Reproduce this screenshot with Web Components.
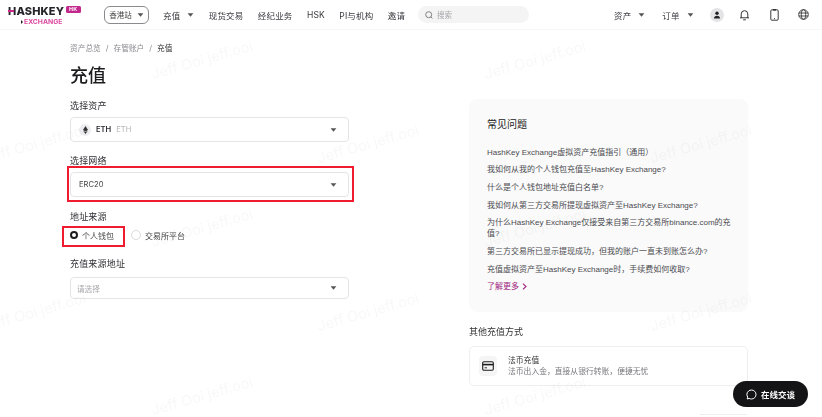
<!DOCTYPE html>
<html lang="zh"><head><meta charset="utf-8"><title>充值</title>
<style>
html,body{margin:0;padding:0;background:#fff}
body{width:822px;height:417px;overflow:hidden;font-family:Inter,"Noto Sans CJK SC",sans-serif;color:#1c1c1e}
</style></head>
<body>
<hk-app>
  <hk-header></hk-header>
  <hk-main></hk-main>
  <hk-watermark></hk-watermark>
  <hk-chat></hk-chat>
  <hk-peek></hk-peek>
</hk-app>
<script>
function def(name,css,html){
  customElements.define(name,class extends HTMLElement{
    constructor(){super();const s=this.attachShadow({mode:'open'});
      const get=(a,d='')=>this.getAttribute(a)??d;
      s.innerHTML='<style>'+css+'</style>'+(typeof html==='function'?html(get):html);}
  });
}
const caret=(c='#555')=>`<svg width="7" height="4" viewBox="0 0 7 4"><path d="M.6.3h5.8L3.5 3.7z" fill="${c}"/></svg>`;

def('hk-app',`:host{display:block;position:relative;width:822px;height:417px;overflow:hidden;filter:blur(.3px)}`,`<slot></slot>`);

def('hk-logo',`:host{display:flex;flex-direction:column;width:82px;align-items:flex-start;font-family:Inter,sans-serif;margin-top:1px}
.top{display:flex;align-items:center;gap:1.5px;height:11px}
.name{font-size:11px;font-weight:800;letter-spacing:.15px;line-height:11px;color:#24242a}
.name b{position:relative;font-weight:800;display:inline-block}
.name b::after{content:"";position:absolute;left:0;top:4.4px;width:5.5px;height:2.4px;background:#d0268c}
.hk{background:#c2288c;color:#fbe3f2;font-size:5.4px;font-weight:800;border-radius:1.5px;height:7px;line-height:7px;box-sizing:border-box;width:15px;text-align:center;margin-top:-4px}
.ex{display:flex;align-items:center;gap:1px;margin:2px 0 0 13px;font-size:6.8px;line-height:6px;font-weight:700;color:#dc4aa2}
.ex i{width:0;height:0;border-left:2.5px solid #222;border-top:2px solid transparent;border-bottom:2px solid transparent}`,
`<div class="top"><span class="name"><b>H</b>ASHKEY</span><span class="hk">HK</span></div><div class="ex"><i></i><span>EXCHANGE</span></div>`);

def('hk-nav-item',`:host{display:inline-flex;align-items:center;gap:7px;font-size:8.5px;color:#3a3a40;white-space:nowrap;letter-spacing:.02em}`,
 g=>`<span>${g('label')}</span>${g('caret')!==''?caret():''}`);

def('hk-header',`:host{display:flex;align-items:center;height:30px;box-sizing:border-box;border-bottom:1px solid #f6f6f6;padding:0 0 0 8px}
hk-logo{margin-right:14px}
.site{display:flex;align-items:center;justify-content:center;gap:5px;width:45px;height:18px;box-sizing:border-box;border:1px solid #8a8a8e;border-radius:6px;font-size:7.5px;color:#444;margin-right:14px}
nav{display:flex;gap:14.4px;align-items:center;width:255px}
.search{display:flex;align-items:center;gap:4px;width:111px;height:17px;background:#f4f4f5;border-radius:9px;box-sizing:border-box;padding-left:7px;font-size:7.5px;color:#a5a5aa;margin-right:85px}
.right{display:flex;align-items:center}
.right hk-nav-item+hk-nav-item{margin-left:17px}
.av{width:14px;height:14px;border-radius:50%;background:#e4e4e6;display:flex;align-items:center;justify-content:center;margin-left:16px}
svg.i{display:block}
.bell{margin-left:15.5px}.ph{margin-left:19.5px}.gl{margin-left:19px}`,
`<hk-logo></hk-logo>
<div class="site"><span>香港站</span>${caret()}</div>
<nav><hk-nav-item label="充值" caret="1"></hk-nav-item><hk-nav-item label="现货交易"></hk-nav-item><hk-nav-item label="经纪业务"></hk-nav-item><hk-nav-item label="HSK"></hk-nav-item><hk-nav-item label="PI与机构"></hk-nav-item><hk-nav-item label="邀请"></hk-nav-item></nav>
<div class="search"><svg class="i" width="8" height="8" viewBox="0 0 8 8" fill="none" stroke="#666" stroke-width=".8"><circle cx="3.7" cy="3.7" r="3"/><path d="M5.9 5.9 7.4 7.4"/></svg><span>搜索</span></div>
<div class="right"><hk-nav-item label="资产" caret="1"></hk-nav-item><hk-nav-item label="订单" caret="1"></hk-nav-item>
<div class="av"><svg class="i" width="8" height="8" viewBox="0 0 8 8" fill="#222"><circle cx="4" cy="2.2" r="1.7"/><path d="M1 7.4c0-1.8 1.3-2.6 3-2.6s3 .8 3 2.6z"/></svg></div>
<svg class="i bell" width="11" height="12" viewBox="0 0 11 12" fill="none" stroke="#222" stroke-width=".9"><path d="M2.2 8.8V5a3.3 3.3 0 0 1 6.6 0v3.8M1 8.8h9M4.2 10.8h2.6"/></svg>
<svg class="i ph" width="9" height="12" viewBox="0 0 9 12" fill="none" stroke="#222" stroke-width=".9"><rect x=".8" y=".8" width="7.4" height="10.4" rx="1"/><path d="M3 .9h3" stroke-width="1.3"/><path d="M4 9.6h1"/></svg>
<svg class="i gl" width="11" height="11" viewBox="0 0 11 11" fill="none" stroke="#222" stroke-width=".8"><circle cx="5.5" cy="5.5" r="4.8"/><ellipse cx="5.5" cy="5.5" rx="2.2" ry="4.8"/><path d="M.8 4h9.4M.8 7h9.4"/></svg></div>`);

def('hk-select',`:host{display:flex;align-items:center;box-sizing:border-box;width:279px;height:25px;border:1px solid #e4e4e7;border-radius:4px;padding:0 11px 0 8px;justify-content:space-between;background:#fff;font-size:7.6px;color:#444}
:host(.low){height:22px;padding-left:6px}
.l{display:flex;align-items:center;gap:5px}.ph{color:#a8a8ad}.sub{color:#b5b5ba}.m{font-weight:600;color:#2b2b30}
.coin{width:12px;height:12px;border-radius:50%;background:#eeeef2;display:flex;align-items:center;justify-content:center}`,
 g=>`<div class="l">${g('coin')?`<span class="coin"><svg width="5" height="8" viewBox="0 0 5 8" fill="#333"><path d="M2.5 0 5 4 2.5 5.4 0 4z"/><path d="M2.5 8 .2 4.8 2.5 6 4.8 4.8z"/></svg></span><span class="m">${g('coin')}</span><span class="sub">${g('coin')}</span>`:`<span class="${g('ph')?'ph':''}">${g('ph')||g('value')}</span>`}</div>${caret('#555')}`);

def('hk-label',`:host{display:block;font-size:9px;line-height:12px;color:#2e2e33;letter-spacing:.02em}`,`<slot></slot>`);

def('hk-radio',`:host{display:inline-flex;align-items:center;gap:4px;font-size:8px;color:#444}
i{width:8px;height:8px;border-radius:50%;border:1px solid #dcdce0;background:#fff;display:block}
:host([checked]) i{width:4px;height:4px;border:2.5px solid #1c1c1e}`,g=>`<i></i><span>${g('label')}</span>`);

def('hk-mark',`:host{position:absolute;display:block;border:2px solid #ee1c2e;box-sizing:border-box;pointer-events:none}`,``);

def('hk-form',`:host{display:flex;flex-direction:column;width:279px;position:relative}
.crumb{font-size:7.7px;line-height:12px;color:#8a8a90;display:flex;gap:5px;margin-top:13px}
.crumb b{font-weight:400;color:#333}
h1{margin:8px 0 0;font-size:18px;line-height:26px;font-weight:500;color:#1c1c1e}
hk-label{margin-top:13px;margin-bottom:5px}
.first{margin-top:11px}
.radios{display:flex;gap:17px;margin-top:1px;height:12px;align-items:center}
hk-label.src{margin-top:14px}
hk-label.addr{margin-top:17px;margin-bottom:7px}
.m1{left:-3px;top:136px;width:287px;height:36px}.m2{left:-8px;top:196px;width:63px;height:21px}`,
`<div class="crumb"><span>资产总览</span><span>/</span><span>存管账户</span><span>/</span><b>充值</b></div>
<h1>充值</h1>
<hk-label class="first">选择资产</hk-label><hk-select coin="ETH"></hk-select>
<hk-label>选择网络</hk-label><hk-select value="ERC20"></hk-select>
<hk-label class="src">地址来源</hk-label>
<div class="radios"><hk-radio checked label="个人钱包"></hk-radio><hk-radio label="交易所平台"></hk-radio></div>
<hk-label class="addr">充值来源地址</hk-label><hk-select class="low" ph="请选择"></hk-select>
<hk-mark class="m1"></hk-mark><hk-mark class="m2"></hk-mark>`);

def('hk-faq',`:host{display:block;box-sizing:border-box;width:279px;height:213px;background:#fafafa;border-radius:8px;padding:18px 15px 0 18px;font-family:"Liberation Sans","Noto Sans CJK SC",sans-serif;font-size:8px;color:#4a4a50}
h2{margin:0 0 13.5px;font-size:10px;line-height:16px;font-weight:400;color:#222}
ul{list-style:none;margin:0;padding:0;display:flex;flex-direction:column;gap:6.7px}
li{line-height:11px;word-break:break-all}
.more{display:flex;align-items:center;gap:3px;color:#a0267f;margin-top:6.7px;line-height:11px}`,
`<h2>常见问题</h2><ul>
<li>HashKey Exchange虚拟资产充值指引（通用）</li>
<li>我如何从我的个人钱包充值至HashKey Exchange?</li>
<li>什么是个人钱包地址充值白名单?</li>
<li>我如何从第三方交易所提现虚拟资产至HashKey Exchange?</li>
<li>为什么HashKey Exchange仅接受来自第三方交易所binance.com的充值?</li>
<li>第三方交易所已显示提现成功，但我的账户一直未到账怎么办?</li>
<li>充值虚拟资产至HashKey Exchange时，手续费如何收取?</li></ul>
<div class="more"><span>了解更多</span><svg width="5" height="7" viewBox="0 0 5 7" fill="none" stroke="#a0267f" stroke-width="1.1"><path d="M1 .7 4 3.5 1 6.3"/></svg></div>`);

def('hk-other',`:host{display:block;width:279px;margin-top:14px}
h3{margin:0 0 8px;font-size:9px;line-height:12px;font-weight:400;color:#333}
.card{display:flex;align-items:center;gap:11px;box-sizing:border-box;height:40px;border:1px solid #eeeef0;border-radius:5px;padding:0 0 0 9px;background:#fff}
.ic{width:18px;height:20px;border-radius:4px;background:#f5f5f6;display:flex;align-items:center;justify-content:center}
.t{font-size:7.8px;line-height:11px;color:#333}.s{font-size:7.8px;line-height:11px;color:#77777d}`,
`<h3>其他充值方式</h3><div class="card"><div class="ic"><svg width="12" height="10" viewBox="0 0 12 10" fill="none" stroke="#1c1c1e"><rect x=".7" y=".7" width="10.6" height="8.6" rx="1.2" stroke-width="1.1"/><path d="M.7 3.6h10.6" stroke-width="1.6"/><path d="M2.6 6.8h2.4" stroke-width=".9"/></svg></div><div><div class="t">法币充值</div><div class="s">法币出入金，直接从银行转账，便捷无忧</div></div></div>`);

def('hk-main',`:host{display:grid;grid-template-columns:279px 279px;column-gap:120px;padding:0 0 0 70px}
.r{padding-top:69px}`,
`<hk-form></hk-form><div class="r"><hk-faq></hk-faq><hk-other></hk-other></div>`);

def('hk-watermark',`:host{position:absolute;inset:0;display:block;pointer-events:none;font-family:Inter,sans-serif}
span{position:absolute;font-size:14.5px;line-height:18px;white-space:nowrap;color:rgba(60,60,70,.035);transform:rotate(-16deg);transform-origin:center;width:130px;text-align:center}`,
()=>{const p=[[152,53],[485,53],[-15,137],[318,137],[651,137],[152,221],[485,221],[-15,305],[318,305],[651,305],[152,389],[485,389]];
return p.map(([x,y])=>`<span style="left:${x-15}px;top:${y-2}px">Jeff Ooi jeff.ooi</span>`).join('')});

def('hk-chat',`:host{position:absolute;left:733px;top:381px;width:75px;height:26px;border-radius:13px;background:#141416;color:#fff;display:flex;align-items:center;justify-content:center;gap:4px;font-size:8.5px;font-weight:700}`,
`<svg width="11" height="11" viewBox="0 0 11 11" fill="none" stroke="#fff" stroke-width="1"><path d="M5.5 1a4.5 4.5 0 0 1 0 9c-.9 0-1.7-.2-2.4-.6L1.2 10l.5-1.9A4.5 4.5 0 0 1 5.5 1z"/></svg><span>在线交谈</span>`);

def('hk-peek',`:host{position:absolute;left:700px;top:414px;width:47px;height:3px;background:#fff;border-top:1px solid #eeeef0;box-sizing:border-box;display:block}`,``);
</script>
</body></html>
